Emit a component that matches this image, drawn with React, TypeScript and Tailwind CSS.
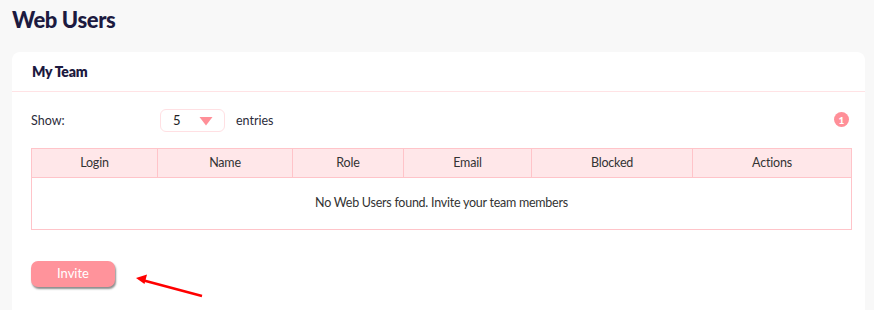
import React from "react";

export default function App() {
  const cols = [
    { label: "Login", w: 126 },
    { label: "Name", w: 135 },
    { label: "Role", w: 111 },
    { label: "Email", w: 128 },
    { label: "Blocked", w: 161 },
    { label: "Actions", w: 159 },
  ];
  return (
    <div className="w-[874px] h-[334px] bg-white relative overflow-hidden" style={{ fontFamily: "Lato, 'Noto Sans', sans-serif" }}>
      <div className="h-[310px] bg-[#f8f8f8] pl-3 pr-[9px] overflow-hidden">
        <div className="pt-[7px] h-[52px]">
          <h1 className="text-[22px] leading-[26px] font-black text-[#1c1a40] tracking-[-0.4px]">Web Users</h1>
        </div>
        <div className="bg-white rounded-lg h-[300px]">
          <div className="h-10 px-5 flex items-center border-b border-[#ffe3e5]">
            <span className="text-[14px] font-extrabold text-[#1c1a40] tracking-[-0.2px]">My Team</span>
          </div>
          <div className="pl-[19px] pr-[14px] pt-[17px]">
            <div className="flex items-center h-[23px]">
              <span className="text-[12.5px] text-[#2b2b3a] w-[129px] pt-[2px]">Show:</span>
              <div className="w-[65px] h-[23px] border border-[#ffe0e3] rounded-[6px] flex items-center pl-3 pr-[11px] justify-between">
                <span className="text-[13px] text-[#222] pt-px">5</span>
                <svg width="14" height="10" viewBox="0 0 14 10">
                  <path d="M0.5 1 L13.5 1 L7 9.5 Z" fill="#ff8f98" strokeLinejoin="round" />
                </svg>
              </div>
              <span className="text-[12.5px] text-[#2b2b3a] ml-[11px] pt-[2px]">entries</span>
              <div className="ml-auto mr-[2px] -mt-[2px] w-[15px] h-[15px] rounded-full bg-[#ff8f98] flex items-center justify-center">
                <span className="text-[10px] font-black text-white leading-none">1</span>
              </div>
            </div>
            <table className="mt-[16px] border-collapse table-fixed w-[821px]">
              <thead>
                <tr className="bg-[#ffe7e9] h-[29px]">
                  {cols.map((c) => (
                    <th key={c.label} style={{ width: c.w }} className="border border-[#ffc4c9] text-[12.5px] tracking-[-0.2px] font-normal text-[#333] text-center p-0">
                      {c.label}
                    </th>
                  ))}
                </tr>
              </thead>
              <tbody>
                <tr className="h-[52px]">
                  <td colSpan={6} className="border border-[#ffc4c9] text-center text-[12.5px] tracking-[-0.25px] text-[#333] pb-px">
                    No Web Users found. Invite your team members
                  </td>
                </tr>
              </tbody>
            </table>
            <button className="mt-[31px] w-[84px] h-[26px] rounded-[7px] bg-[#ff939b] text-white text-[13px] shadow-[1px_2px_2px_rgba(0,0,0,0.45)]">
              Invite
            </button>
          </div>
        </div>
      </div>
      <svg className="absolute left-0 top-0 pointer-events-none" width="874" height="334">
        <line x1="202" y1="296" x2="142" y2="280" stroke="#ff0000" strokeWidth="2.6" />
        <path d="M136 278 L147 274.5 L144.5 284 Z" fill="#ff0000" />
      </svg>
    </div>
  );
}
